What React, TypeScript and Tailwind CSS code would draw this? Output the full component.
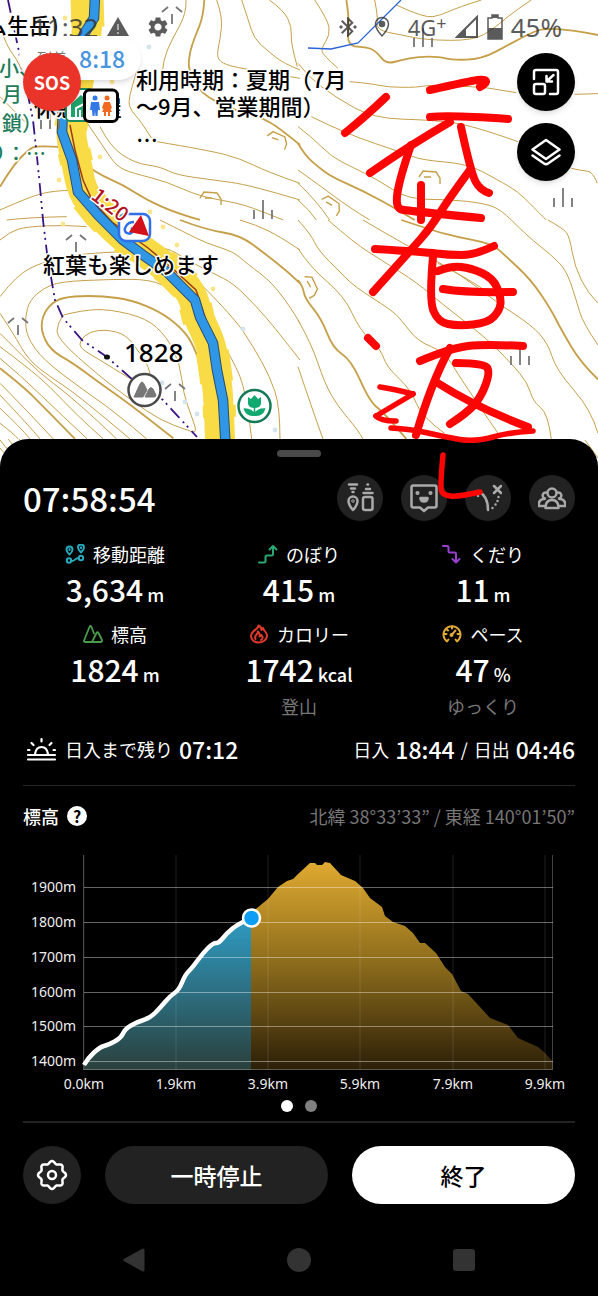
// App.tsx
import type { ReactNode } from "react";
import { MdBluetoothConnected, MdSettings } from "react-icons/md";

// 計測データ1項目分の型
type Stat = {
  label: string;
  value: string;
  unit: string;
  note?: string;
  icon: ReactNode;
};

// 点列を中点でつないで滑らかなパスにする
function smooth(points: string) {
  const p = points.split(" ").map((s) => s.split(",").map(Number));
  if (p.length < 3) return `M${p.map((q) => q.join(" ")).join("L")}`;
  let d = `M${p[0][0]} ${p[0][1]}`;
  for (let i = 1; i < p.length - 2; i++) {
    d += `Q${p[i][0]} ${p[i][1]} ${(p[i][0] + p[i + 1][0]) / 2} ${(p[i][1] + p[i + 1][1]) / 2}`;
  }
  const a = p[p.length - 2];
  const b = p[p.length - 1];
  return `${d}Q${a[0]} ${a[1]} ${b[0]} ${b[1]}`;
}

// ---- 地図の等高線（左上・右上・左下・右下の4タイル、1タイル900単位） ----
type Tile = { x: number; y: number; thin: string[]; thick: string[] };

const tiles: Tile[] = [
  {
    x: 0,
    y: 0,
    thin: [
      "558,0 560,40 515,120 490,180 488,210",
      "650,0 668,50 660,120 650,168 665,190 720,205 900,235",
      "725,0 745,60 762,115 800,150 850,190 900,210",
      "808,0 850,30 876,80 872,130 892,200",
      "470,425 620,450 720,475 800,515 900,550",
      "410,215 382,300 395,335 420,360 455,415",
      "300,380 330,440 405,490 480,500 530,525 640,540 750,555 900,600",
      "262,370 310,440 350,500 400,520 500,545 600,590 720,610 800,640 850,660",
      "0,80 20,140 60,190 80,250",
      "0,290 30,320 80,370",
      "0,630 90,590 160,572 225,570",
      "20,660 90,652 200,650",
    ],
    thick: [
      "613,0 610,50 585,110 568,160 565,210 600,280 700,330 780,350 840,385 900,435",
      "0,560 40,495 85,450 110,436 190,442",
      "235,480 290,520 370,555 440,600 530,640 600,660",
    ],
  },
  {
    x: 298,
    y: 0,
    thin: [
      "50,0 90,60 96,105 70,145 75,165 120,205",
      "155,245 215,250 270,262 360,262 390,255 570,260 655,278",
      "830,283 900,281",
      "230,0 240,50 235,90 310,105 385,120 525,122 590,85 640,40 700,0",
      "295,15 380,55 430,45 480,22 550,0",
      "0,190 30,230 110,290 225,355 400,360 520,375 660,425",
      "40,350 145,402 320,460 370,480 510,492 600,540 660,575 700,615 745,660",
      "0,380 40,410 100,470 160,500 240,540 330,598 450,598 560,610 610,630 640,660",
      "820,505 850,512 885,515 898,550",
      "0,510 70,560 150,620 215,660",
      "0,550 50,595 95,660",
      "0,600 35,630 55,660",
    ],
    thick: [
      "145,0 155,60 146,138 210,142 235,155 265,192 310,180 360,170 425,170 460,180 550,178 640,130 700,98 740,85 820,90 900,105",
      "0,430 20,465 60,500 100,530 200,575 300,630 350,660",
    ],
  },
  {
    x: 0,
    y: 220,
    thin: [
      "450,510 380,470 300,420 240,385 240,360 270,335 320,328 380,345 420,400 455,455 450,500",
      "190,285 250,270 330,268 440,295 500,350 540,430 550,520 575,590 592,640 560,630 480,600 400,545 300,470 170,355 172,310 190,285",
      "560,250 520,210 450,178 330,178 180,185 130,205 90,240 75,290 80,350 130,420 250,510 350,580 440,657",
      "0,230 50,165 130,125 240,100 370,95",
      "0,60 30,35 80,20 200,15 260,20",
      "0,280 40,340 85,420 150,470 240,530 390,657",
      "0,340 50,390 120,460 200,520 290,600 350,657",
      "0,380 80,440 150,500 230,585 310,657",
      "0,415 60,465 190,590 262,657",
      "0,490 60,550 160,657",
      "0,525 90,620 120,657",
      "0,565 60,620 90,657",
      "0,610 40,640 55,657",
      "480,0 560,40 620,70 700,95 740,130 820,190 890,290 900,310",
      "410,70 500,80 560,120 640,160 700,190 770,260 830,330 900,420",
      "600,190 700,290 760,380 810,470 840,560 840,657",
      "650,340 700,420 740,520 755,657",
      "720,0 770,15 840,50 900,90",
    ],
    thick: [
      "635,510 600,430 575,365 540,320 480,275 395,240 310,228 220,228 165,240 130,280 122,330 150,390 220,430 300,490 400,560 520,655",
      "0,445 70,500 130,560 225,657",
      "540,0 620,30 720,45 800,105 870,160 900,190",
    ],
  },
  {
    x: 298,
    y: 220,
    thin: [
      "0,0 40,45 60,90 130,160 170,200 280,270 310,300 360,365 440,395 490,480 600,640",
      "90,0 170,70 250,120 360,190 430,250 560,350 640,430 690,490 705,545 750,580 760,657",
      "195,0 330,80 470,150 600,250 700,315 750,370 775,450 880,570 900,640",
      "0,85 35,140 140,230 185,330 250,390 265,440 340,510 370,590 440,640",
      "0,300 40,370 80,490 120,560 180,630 195,657",
      "0,440 40,560 75,657",
      "640,0 690,50 760,105 805,150 835,240 855,310 900,375",
      "750,0 795,25 815,50 830,140 870,220 900,250",
      "420,130 500,170 560,210",
    ],
    thick: [
      "310,0 400,30 480,52 580,70 620,105 700,180 760,270 790,330 850,430 900,478",
      "0,180 15,200 20,235 70,295 105,385 160,420 215,545 260,580 325,657",
    ],
  },
];

const river = "95,-4 94,18 84,34 70,70 63,110 62,132 72,160 78,192 98,215 123,240 143,255 167,272 195,300 200,317 213,343 217,370 223,400 227,470";
const riverGlow = "87,-4 88,30 82,60 74,110 70,132 76,160 82,192 98,212 120,235 145,252 170,270 192,292 198,317 211,343 215,370 219,400 221,470";

// 手書きの線
const strokes = [
  "430,90 470,81 485,79 487,83 480,87",
  "386,97 365,117 345,133",
  "430,117 451,115 508,119",
  "450,122 410,145 370,173",
  "411,145 400,177 395,208 408,211 481,218",
  "461,127 471,173 480,190 489,193",
  "470,170 450,197 431,227 411,250 373,292",
  "421,185 421,220",
  "375,249 425,252 448,255 475,255 494,246",
  "433,257 429,300 438,322 458,326 488,323 500,310 501,297 493,278 471,268 451,266 438,271",
  "443,289 468,293 513,292",
  "368,338 376,346",
  "420,361 451,348 485,344 523,346",
  "450,348 431,383 416,435",
  "456,363 485,363 490,373 481,397 467,413 450,424",
  "436,382 475,407 528,427",
];
const thinStrokes = [
  "380,387 394,389 413,394",
  "413,394 376,416",
  "376,416 380,421 396,421",
  "391,428 411,429 445,437 475,442 511,432 533,431",
  "443,455 440,487 443,495 458,497 480,492",
];

// 荒地・笹地の記号
const bars = [[263, 210], [563, 198], [520, 356], [423, 38], [50, 120]];
const palms = [[172, 14], [76, 242], [18, 325], [175, 391]];
const hollows = [[209, 197, 0], [276, 138, 20], [428, 176, 0], [310, 284, 60], [330, 203, 30]];

const labelFont = "font-['Noto_Sans_CJK_JP',sans-serif] font-medium";

function TrailMap() {
  return (
    <svg
      viewBox="0 0 598 470"
      preserveAspectRatio="xMidYMin slice"
      className="block h-[470px] w-full bg-white"
      role="img"
      aria-label="登山地図"
    >
      {tiles.map((t) => (
        <g key={`${t.x}-${t.y}`} transform={`translate(${t.x} ${t.y}) scale(0.3333)`} fill="none" stroke="#c5a049" strokeLinejoin="round">
          {t.thin.map((p) => <path key={p} d={smooth(p)} strokeWidth="3" />)}
          {t.thick.map((p) => <path key={p} d={smooth(p)} strokeWidth="5.5" />)}
        </g>
      ))}
      <path d="M0 440 16 460M8 439 24 458M19 439 36 458M0 448 10 460M560 440 590 470M585 440 598 458" stroke="#c5a049" />

      {/* 沢 */}
      <polyline points="401,0 358,43 331,49 308,48" fill="none" stroke="#2a62d8" strokeWidth="1.3" />

      {/* 県境 */}
      <polyline
        points="8,0 25,80 33,120 37,157 40,187 43,220 45,237 47,253 52,283 55,300 63,318 82,340 107,357 133,380 163,400 197,437"
        fill="none"
        stroke="#3a1483"
        strokeWidth="1.8"
        strokeDasharray="13 5 2 4 2 5"
      />

      {/* 軌跡とルート */}
      <path d={smooth(riverGlow)} fill="none" stroke="#f8db45" strokeWidth="30" />
      <polyline points={riverGlow} fill="none" stroke="#f8db45" strokeWidth="33" strokeLinejoin="round" strokeDasharray="31 23 12 37" />
      <g fill="#f9e58a">
        {[[65, 18], [113, 108], [100, 157], [59, 180], [63, 224], [150, 212], [177, 245], [213, 289], [112, 82], [163, 227]].map(([x, y]) => (
          <circle key={`${x}-${y}`} cx={x} cy={y} r="2.4" />
        ))}
      </g>
      <g fill="#d4e3ec">
        {[[149, 47], [243, 329], [197, 414], [275, 430], [162, 383], [185, 402]].map(([x, y]) => (
          <circle key={`${x}-${y}`} cx={x} cy={y} r="2.4" />
        ))}
      </g>
      <polyline points="70,125 75,150 83,180 92,200 112,222 148,248 172,268 196,290 206,320 214,345" fill="none" stroke="#a23a12" strokeWidth="1.5" />
      <polyline points={river} fill="none" stroke="#2b4d73" strokeWidth="10.5" />
      <polyline points={river} fill="none" stroke="#3096e6" strokeWidth="8.5" />

      <g stroke="#777" strokeWidth="1.8">
        {bars.map(([x, y]) => (
          <path key={x} d={`M${x - 9} ${y}v9M${x} ${y - 10}v19M${x + 9} ${y}v9`} />
        ))}
        {palms.map(([x, y]) => (
          <path key={x} d={`M${x} ${y}v10M${x - 4} ${y - 7}l-6 5M${x + 4} ${y - 7}l6 5`} />
        ))}
      </g>
      <g fill="none" stroke="#c5a049" strokeWidth="1.4">
        {hollows.map(([x, y, a]) => (
          <path key={x} d="M-9 1-5-5 8-4 12 2V8M-4 1h7" transform={`translate(${x} ${y}) rotate(${a})`} />
        ))}
      </g>

      {/* 地名・コメント */}
      <g className={labelFont} fontSize="22" stroke="#fff" strokeWidth="3" strokeLinejoin="round" paintOrder="stroke">
        <text x="-15" y="34">ム生岳)</text>
        <text x="34" y="116">休憩小屋</text>
        <g fill="#1f7d5a" fontSize="20">
          <text x="-1" y="76">小、</text>
          <text x="2" y="102">月</text>
          <text x="2" y="131">鎖）</text>
          <text x="-14" y="161">り：…</text>
        </g>
        <text x="136" y="88">利用時期：夏期（7月</text>
        <text x="136" y="115">〜9月、営業期間）</text>
        <text x="136" y="148">…</text>
        <text x="43" y="273">紅葉も楽しめます</text>
        <text x="124" y="362" fontSize="26" className="font-['Noto_Sans',sans-serif]">1828</text>
      </g>
      <ellipse cx="107" cy="357" rx="3" ry="2.6" fill="#111" />

      {/* 山小屋とトイレ */}
      <rect x="66" y="89" width="26" height="32" rx="4" fill="#fff" stroke="#1c8a5d" strokeWidth="2" />
      <path d="M71 104 81 95l10 9v13H71z" fill="#1fa36c" />
      <path d="M76 117v-9l8-4M80 117v-7" stroke="#fff" strokeWidth="2" fill="none" />
      <rect x="84.5" y="90" width="33" height="31.5" rx="5" fill="#fff" stroke="#000" strokeWidth="3" />
      <g fill="#3478e5">
        <circle cx="95" cy="98" r="2.5" />
        <path d="M91 102h8l1 8h-2l-.5 6h-2l-.5-5-.5 5h-2l-.5-6h-2z" />
      </g>
      <g fill="#f26a21">
        <circle cx="107" cy="98" r="2.5" />
        <path d="M104 102h6l2 6-1.5 1 1.5 3h-2v4h-2v-4h-2v4h-2v-4h-2l1.5-3-1.5-1z" />
      </g>

      {/* 現在地 */}
      <rect x="119" y="214" width="31" height="27" rx="7" fill="#fff" stroke="#2f6fe8" strokeWidth="2.5" />
      <path d="M134 222c-8 0-12 9-7 11 4 2 8-2 4-5" fill="none" stroke="#2f6fe8" strokeWidth="2.5" />
      <path d="M141 215 149 236 129 232z" fill="#d3111b" />
      <text
        x="90"
        y="198"
        transform="rotate(38 90 198)"
        fontSize="20"
        fill="#b3121f"
        stroke="#fff"
        strokeWidth="3"
        paintOrder="stroke"
        className={labelFont}
      >
        1:20
      </text>

      {/* 山頂 */}
      <circle cx="144.5" cy="390" r="16" fill="#fff" stroke="#4a4a4a" strokeWidth="2.5" />
      <path d="M134 397 140 384q2-4 4 0l3 6-4 7zM145 397l4-8q2-3 4 0l3 6q0 2-2 2z" fill="#777" stroke="#777" strokeLinejoin="round" />

      {/* 花 */}
      <circle cx="254.5" cy="406" r="16" fill="#fff" stroke="#147a55" strokeWidth="2.5" />
      <path d="M248 397l3 2 3.5-4 3.5 4 3-2v7q-1 4-6.5 4T248 404z" fill="#12a971" />
      <path d="M254.5 406v10M254.5 415q-8 1-10-6 8 0 10 6zq8 1 10-6-8 0-10 6z" fill="#12a971" stroke="#12a971" strokeWidth="1.5" />
    </svg>
  );
}

function StatusBar() {
  return (
    <div className="absolute inset-x-0 top-0 flex h-[54px] items-center justify-between pr-9 pl-8 font-['Noto_Sans',sans-serif] text-[26px] text-[#333] opacity-80">
      <div className="flex items-center gap-2">
        <span>11:32</span>
        <svg viewBox="0 0 24 24" className="h-6 w-6">
          <path d="M12 2 23 21H1z" fill="#333" />
          <path d="M12 9v6M12 17v2" stroke="#999" strokeWidth="2" />
        </svg>
        <MdSettings className="ml-2 h-6 w-6" />
      </div>
      <div className="flex items-center gap-2">
        <MdBluetoothConnected className="h-6 w-6" />
        <svg viewBox="0 0 20 24" className="mx-1 h-6 w-5" fill="none" stroke="#333" strokeWidth="1.5">
          <path d="M10 21S3.500 14 3.500 9a6.500 6.500 0 0 1 13 0c0 5-6.500 12-6.500 12z" />
          <circle cx="10" cy="9" r="2.5" fill="#333" />
        </svg>
        <span className="ml-1 flex items-start text-[22px] leading-6">
          4G<span className="text-lg leading-4">+</span>
        </span>
        <svg viewBox="0 0 24 24" className="h-6 w-6">
          <path d="M22 2v20H2z" fill="none" stroke="#333" strokeWidth="2" />
          <path d="M11 13v9H2z" fill="#333" />
        </svg>
        <svg viewBox="0 0 16 26" className="h-[26px] w-4">
          <path d="M5 1h6v3h4v21H1V4h4z" fill="none" stroke="#333" strokeWidth="1.5" />
          <path d="M1 14h14v11H1zM5 1h6v3H5z" fill="#333" />
        </svg>
        <span>45%</span>
      </div>
    </div>
  );
}

const gearPoints = Array.from({ length: 96 }, (_, i) => {
  const a = (i / 96) * Math.PI * 2;
  const r = 12.7 + 1.3 * Math.cos(a * 8);
  return `${(16 + r * Math.cos(a)).toFixed(2)},${(16 + r * Math.sin(a)).toFixed(2)}`;
}).join(" ");

const stats: Stat[] = [
  {
    label: "移動距離",
    value: "3,634",
    unit: "m",
    icon: (
      <g stroke="#27a9bd" strokeWidth="2">
        <path d="M4.500 10.500S1.500 8 1.500 5.500a3 3 0 0 1 6 0c0 2.500-3 5-3 5zM16 8.500s-3-3-3-5a3 3 0 0 1 6 0C19 5.500 16 8.500 16 8.500z" />
        <circle cx="4" cy="16.500" r="2.200" />
        <circle cx="16" cy="14" r="2.200" />
        <path d="M6 17c4 1 4-4 8-2.500M4.500 5v1M16 3.200v1" />
      </g>
    ),
  },
  {
    label: "のぼり",
    value: "415",
    unit: "m",
    icon: <path d="M1 18.500h5q1.500 0 1.500-1V13q0-1.500 1.500-1.500h4.500q1.500 0 1.500-1.500V2M11.500 5.500 15 2l3.500 3.500" stroke="#27a875" strokeWidth="2" />,
  },
  {
    label: "くだり",
    value: "11",
    unit: "m",
    icon: <path d="M1 2h4q1.500 0 1.500 1.500V7q0 1.500 1.500 1.500h4.500Q14 8.500 14 10v8M10.500 15 14 18.500l3.500-3.500" stroke="#9a3fd0" strokeWidth="2" />,
  },
  {
    label: "標高",
    value: "1824",
    unit: "m",
    icon: (
      <path d="M9 18H2q-1.500 0-1-1.500L6.500 3q1-2 2 0L11 9.500M9 18l4.500-9q1-1.500 2 0l3.500 7q.5 2-1.500 2zM9 18h8" stroke="#4a9b4e" strokeWidth="1.8" />
    ),
  },
  {
    label: "カロリー",
    value: "1742",
    unit: "kcal",
    note: "登山",
    icon: (
      <path
        d="M9.500 1.500C10 5 2 6.500 2 12c0 4 3.500 6.500 7.500 6.500S18 16 18 11.500c0-4-3.500-4-4-7.500-1 .5-1.500 1-1.500 2 0-2-1-3.500-3-4.500zM6.500 15c-2-4 3-4.500 2.500-7.500 2 2 2 3.500 1.500 5 1 0 1.500-.5 2-1.500 2 2.500 1 4-.5 5"
        stroke="#dd3a2c"
        strokeWidth="2"
      />
    ),
  },
  {
    label: "ペース",
    value: "47",
    unit: "%",
    note: "ゆっくり",
    icon: (
      <g stroke="#e0aa35" strokeWidth="2">
        <path d="M5 17.500a8.500 8.500 0 1 1 10 0l-1.500-2M5 17.500l1.500-2M10 2v2.500M2 10h2.500M15.500 10H18M4.500 5l1.500 1.500M9.500 11l4-4.500" />
        <circle cx="9.500" cy="11" r="1" />
      </g>
    ),
  },
];

const tools = [
  {
    name: "地図アイコン",
    icon: (
      <>
        <path d="M3 1.500h8M5 5.500h4M6.500 9h1M21.500 1.500h.5M20 6h4M17.500 10h9" />
        <path d="M7 27s-4.500-5-4.500-9a4.500 4.500 0 0 1 9 0c0 4-4.500 9-4.500 9z" />
        <circle cx="7" cy="18" r="0.5" />
        <rect x="17" y="14" width="9.500" height="13" rx="2" />
      </>
    ),
  },
  {
    name: "フィールドメモ",
    icon: (
      <>
        <path d="M3.500 2.500h21q2 0 2 2v18q0 2-2 2H18l-4 3.500-4-3.500H3.500q-2 0-2-2v-18q0-2 2-2z" />
        <circle cx="7.500" cy="10" r="0.8" fill="currentColor" />
        <circle cx="20.500" cy="10" r="0.8" fill="currentColor" />
        <path d="M10.500 15h7q0 3.500-3.500 3.500T10.500 15z" fill="currentColor" />
      </>
    ),
  },
  {
    name: "ルート変更",
    icon: (
      <>
        <path d="M3 8q11 4 11 19M20 3l7 7M27 3l-7 7" />
        <path d="M24.500 14v.1M23.500 18v.1M21.500 21.500v.1M18.500 25v.1M4 13v.1" />
      </>
    ),
  },
  {
    name: "グループ",
    icon: (
      <>
        <circle cx="14" cy="10" r="4.500" />
        <path d="M7.500 25q0-8 6.500-8t6.500 8zM8.500 9.500a3 3 0 1 0-1.500 6M19.500 9.500a3 3 0 1 1 1.500 6M6.500 16Q.5 16 .5 23H6M21.500 16q6 0 6 7H22" />
      </>
    ),
  },
];

// ---- 標高グラフ ----
const walked = "84,1065 88,1058 100,1047 108,1045 121,1038 125,1029 137,1022 150,1018 160,1008 170,996 179,990 185,975 192,968 203,953 213,943 219,943 227,933 238,924 251,918";
const ahead = "251,912 257,908 268,899 278,887 287,881 293,879 298,874 310,863 315,863 317,865 322,865 325,862 330,863 341,875 355,881 363,888 370,898 382,907 385,916 393,922 405,926 413,933 420,943 425,943 436,953 445,967 452,974 461,991 468,994 480,1007 490,1018 508,1025 518,1038 538,1047 545,1053 553,1062";
const levels = [
  { label: "1900m", y: 887 },
  { label: "1800m", y: 922 },
  { label: "1700m", y: 957 },
  { label: "1600m", y: 992 },
  { label: "1500m", y: 1026 },
  { label: "1400m", y: 1061 },
];
const distances = [
  { label: "0.0km", x: 84 },
  { label: "1.9km", x: 176 },
  { label: "3.9km", x: 268 },
  { label: "5.9km", x: 360 },
  { label: "7.9km", x: 453 },
  { label: "9.9km", x: 545 },
];

function ElevationChart() {
  return (
    <svg viewBox="23 848 552 246" className="block w-full overflow-visible font-['Noto_Sans',sans-serif]" role="img" aria-label="標高グラフ">
      <defs>
        <linearGradient id="walked" gradientUnits="userSpaceOnUse" x1="0" y1="915" x2="0" y2="1070">
          <stop offset="0" stopColor="#2f9dc6" />
          <stop offset="1" stopColor="#2a403c" />
        </linearGradient>
        <linearGradient id="ahead" gradientUnits="userSpaceOnUse" x1="0" y1="862" x2="0" y2="1070">
          <stop offset="0" stopColor="#e0aa31" />
          <stop offset="0.5" stopColor="#8a6a1b" />
          <stop offset="1" stopColor="#2c1f08" />
        </linearGradient>
      </defs>
      <polygon points={`${walked} 251,1070 84,1070`} fill="url(#walked)" />
      <polygon points={`${ahead} 553,1070 251,1070`} fill="url(#ahead)" />
      {distances.map((d) => (
        <g key={d.label}>
          <line x1={d.x} x2={d.x} y1="855" y2="1070" stroke="#fff" strokeOpacity="0.12" />
          <text x={d.x} y="1089" fontSize="14" fill="#eee" textAnchor="middle">{d.label}</text>
        </g>
      ))}
      {levels.map((l) => (
        <g key={l.label}>
          <line x1="84" x2="553" y1={l.y + 0.5} y2={l.y + 0.5} stroke="#fff" strokeOpacity="0.4" />
          <text x="76" y={l.y + 5} fontSize="14" fill="#eee" textAnchor="end">{l.label}</text>
        </g>
      ))}
      <path d="M83.500 855V1069.500H552.500V855" fill="none" stroke="#fff" strokeOpacity="0.25" />
      <path d={smooth(walked)} fill="none" stroke="#fff" strokeWidth="4.5" strokeLinejoin="round" />
      <circle cx="251.5" cy="918" r="8.5" fill="#0d9df5" stroke="#fff" strokeWidth="2.5" />
    </svg>
  );
}

export default function App() {
  return (
    <div className="relative w-full overflow-hidden bg-black font-['Noto_Sans_CJK_JP',sans-serif] text-white">
      {/* 地図 */}
      <section className="relative">
        <TrailMap />
        <StatusBar />
        <div className="absolute top-9 left-[19px] flex h-11 items-center gap-3 rounded-full bg-white pr-4 pl-[18px] shadow-md">
          <span className="text-[15px] text-[#777]">到着</span>
          <span className="text-[23px] font-medium text-[#4795de]">8:18</span>
        </div>
        <button
          type="button"
          className="absolute top-[53px] left-[23px] h-[58px] w-[58px] rounded-full bg-[#ea3429] font-['Noto_Sans_CJK_JP',sans-serif] text-lg font-bold shadow-md"
        >
          SOS
        </button>
        <div className="absolute top-[53px] right-[23px] flex flex-col gap-3">
          <button type="button" aria-label="縮小表示" className="grid h-[58px] w-[58px] place-items-center rounded-full bg-black shadow-md">
            <svg viewBox="0 0 28 28" className="h-7 w-7" fill="none" stroke="#fff" strokeWidth="2.5" strokeLinecap="round" strokeLinejoin="round">
              <path d="M2 11V4q0-2 2-2h20q2 0 2 2v20q0 2-2 2h-6" />
              <rect x="2" y="16" width="11" height="10" rx="2" />
              <path d="M21.500 7 15 13M14.500 8v5.500H20" />
            </svg>
          </button>
          <button type="button" aria-label="レイヤー" className="grid h-[58px] w-[58px] place-items-center rounded-full bg-black shadow-md">
            <svg viewBox="0 0 30 30" className="h-[30px] w-[30px]" fill="none" stroke="#fff" strokeWidth="2.5" strokeLinecap="round" strokeLinejoin="round">
              <path d="M15 3 28.500 12.500 15 22 1.500 12.500zM1.500 18.500 13 26.500q2 1.500 4 0l11.500-8" />
            </svg>
          </button>
        </div>
      </section>

      {/* 記録パネル */}
      <main className="relative -mt-[31px] rounded-t-[28px] bg-black px-[23px] pt-[11px]">
        <div className="mx-auto h-[7px] w-11 rounded-full bg-[#494949]" />

        <div className="mt-[18px] flex items-center justify-between">
          <div className="text-[33px] leading-[46px] font-medium">07:58:54</div>
          <div className="flex gap-[18px]">
            {tools.map((t) => (
              <button key={t.name} type="button" aria-label={t.name} className="grid h-[46px] w-[46px] place-items-center rounded-full bg-[#222] text-[#aaa]">
                <svg viewBox="0 0 28 30" className="h-[30px] w-7" fill="none" stroke="currentColor" strokeWidth="2.5" strokeLinecap="round" strokeLinejoin="round">
                  {t.icon}
                </svg>
              </button>
            ))}
          </div>
        </div>

        <div className="mt-5 grid grid-cols-3 gap-y-3 text-center">
          {stats.map((s) => (
            <div key={s.label}>
              <div className="flex items-center justify-center gap-2 text-lg leading-[26px]">
                <svg viewBox="0 0 20 20" className="h-5 w-5" fill="none" strokeLinecap="round" strokeLinejoin="round">
                  {s.icon}
                </svg>
                {s.label}
              </div>
              <div className="mt-0.5 text-[30px] leading-10 font-medium">
                {s.value}
                <span className="ml-1 text-lg leading-6">{s.unit}</span>
              </div>
              {s.note && <div className="mt-1 text-lg leading-[26px] text-[#777]">{s.note}</div>}
            </div>
          ))}
        </div>

        <div className="mt-3.5 flex items-center justify-between border-b border-[#262626] pb-5 text-lg leading-8">
          <div className="flex items-center gap-1.5">
            <svg viewBox="0 0 34 24" className="h-6 w-9" fill="none" stroke="#fff" strokeWidth="2.2" strokeLinecap="round">
              <path d="M4 22.500h27M4 18h27M11 17q1-7 6.500-7t6.500 7M17.500 2v2.500M7.500 6l2 2M27.500 6l-2 2M4 13h1.500M29.500 13H31" />
            </svg>
            <span>日入まで残り</span>
            <span className="text-[23px] font-medium">07:12</span>
          </div>
          <div className="flex items-center gap-1.5">
            <span>日入</span>
            <span className="text-[23px] font-medium">18:44</span>
            <span>/</span>
            <span>日出</span>
            <span className="text-[23px] font-medium">04:46</span>
          </div>
        </div>

        <div className="mt-4 mb-[18px] flex items-center justify-between text-lg leading-7">
          <div className="flex items-center gap-2 font-medium">
            標高
            <button type="button" aria-label="標高について" className="grid h-5 w-5 place-items-center rounded-full bg-white text-base leading-5 font-bold text-black">
              ?
            </button>
          </div>
          <div className="text-[#777]">北緯 38°33’33” / 東経 140°01’50”</div>
        </div>

        <ElevationChart />

        <div className="mt-1.5 flex justify-center gap-3">
          <span className="h-3 w-3 rounded-full bg-white" />
          <span className="h-3 w-3 rounded-full bg-[#808080]" />
        </div>

        <div className="mt-[9px] flex gap-6 border-t-2 border-[#222] pt-[23px] text-[23px] font-medium">
          <button type="button" aria-label="設定" className="grid h-[58px] w-[58px] place-items-center rounded-full bg-[#222]">
            <svg viewBox="0 0 32 32" className="h-8 w-8" fill="none" stroke="#fff" strokeWidth="2.5" strokeLinejoin="round">
              <polygon points={gearPoints} />
              <circle cx="16" cy="16" r="4" />
            </svg>
          </button>
          <button type="button" className="h-[58px] flex-1 rounded-full bg-[#222]">一時停止</button>
          <button type="button" className="h-[58px] flex-1 rounded-full bg-white text-black">終了</button>
        </div>
      </main>

      {/* 端末のナビゲーション */}
      <nav className="mt-11 flex justify-around px-[52px] pb-6">
        <button type="button" aria-label="戻る">
          <svg viewBox="0 0 24 24" className="h-6 w-6">
            <path d="M3 12 21 2v20z" fill="#333" stroke="#333" strokeWidth="3" strokeLinejoin="round" />
          </svg>
        </button>
        <button type="button" aria-label="ホーム" className="h-6 w-6 rounded-full bg-[#333]" />
        <button type="button" aria-label="履歴" className="h-6 w-6 rounded-sm border border-black bg-[#333]" />
      </nav>

      {/* 手書きメモ */}
      <svg viewBox="0 0 598 500" preserveAspectRatio="xMidYMin slice" className="pointer-events-none absolute inset-x-0 top-0 h-[500px] w-full" fill="none" stroke="#fb0505" strokeLinecap="round" strokeLinejoin="round">
        {strokes.map((p) => <path key={p} d={smooth(p)} strokeWidth="8" />)}
        {thinStrokes.map((p) => <path key={p} d={smooth(p)} strokeWidth="5.5" />)}
      </svg>
    </div>
  );
}
